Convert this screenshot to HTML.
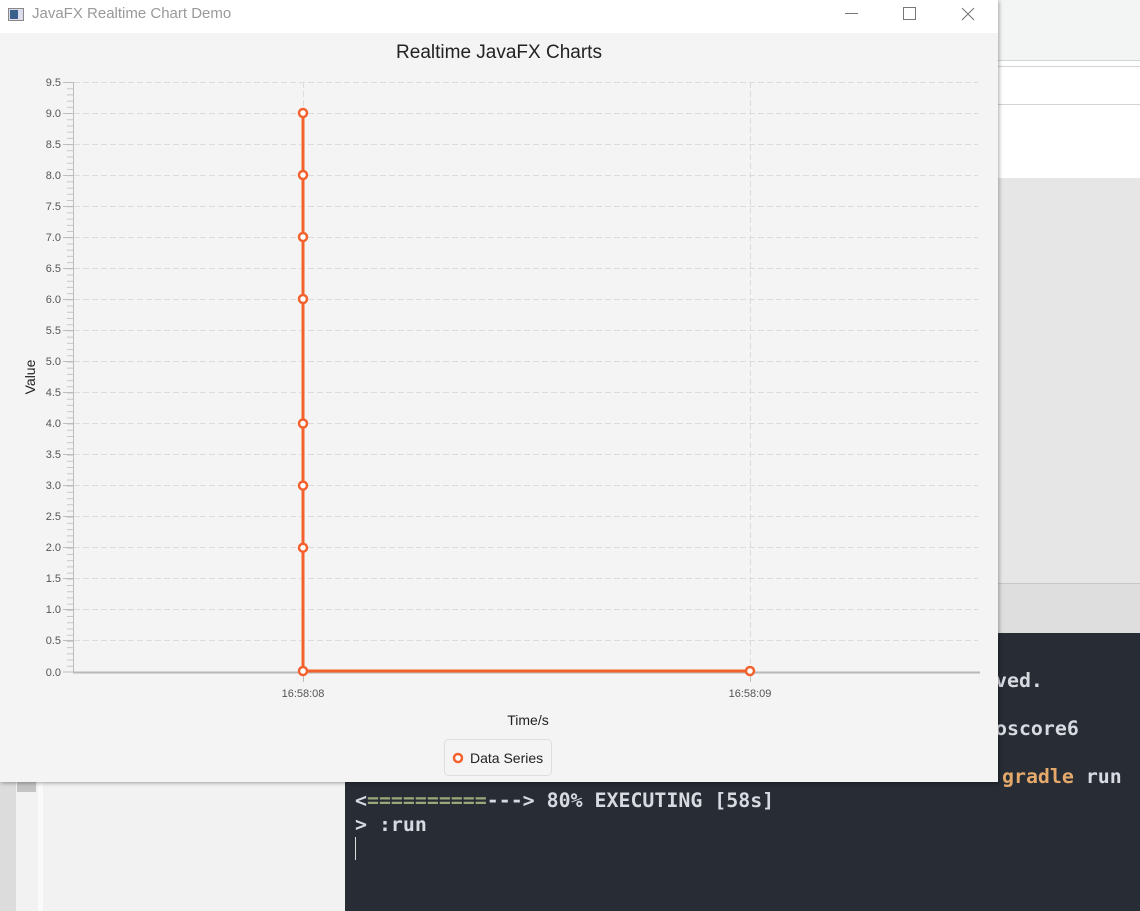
<!DOCTYPE html>
<html><head><meta charset="utf-8"><style>
*{margin:0;padding:0;box-sizing:border-box}
body{width:1140px;height:911px;overflow:hidden;position:relative;background:#e6e6e6;font-family:"Segoe UI","Liberation Sans",sans-serif}
.abs{position:absolute}
.term{font-family:"DejaVu Sans Mono","Liberation Mono",monospace;font-size:19.9px;color:#d7dae0;font-weight:bold;white-space:pre;position:absolute}
</style></head><body>
<div class="abs" style="left:998px;top:0;width:142px;height:60px;background:#f3f4f4"></div>
<div class="abs" style="left:998px;top:60px;width:142px;height:1px;background:#d4d4d4"></div>
<div class="abs" style="left:998px;top:61px;width:142px;height:5px;background:#fff"></div>
<div class="abs" style="left:998px;top:66px;width:142px;height:1px;background:#d4d4d4"></div>
<div class="abs" style="left:998px;top:67px;width:142px;height:37px;background:#fff"></div>
<div class="abs" style="left:998px;top:104px;width:142px;height:1px;background:#d4d4d4"></div>
<div class="abs" style="left:998px;top:105px;width:142px;height:73px;background:#fff"></div>
<div class="abs" style="left:998px;top:583px;width:142px;height:1px;background:#c8c8c8"></div>
<div class="abs" style="left:998px;top:584px;width:142px;height:50px;background:#dedede"></div>
<div class="abs" style="left:0;top:782px;width:345px;height:129px;background:#f2f2f2"></div>
<div class="abs" style="left:0;top:782px;width:16px;height:129px;background:#dcdcdc"></div>
<div class="abs" style="left:17px;top:782px;width:19px;height:10px;background:#c4c4c4"></div>
<div class="abs" style="left:38px;top:782px;width:5px;height:129px;background:#fafafa"></div>
<div class="abs" style="left:345px;top:633px;width:795px;height:278px;background:#282c34"></div>
<div class="term" style="left:995px;top:669px">ved.</div>
<div class="term" style="left:995px;top:717px">oscore6</div>
<div class="term" style="left:1002px;top:765px"><span style="color:#e5a96b">gradle</span> run</div>
<div class="term" style="left:355px;top:789px">&lt;<span style="color:#98a87a">==========</span>---&gt; 80% EXECUTING [58s]</div>
<div class="term" style="left:355px;top:813px">&gt; :run</div>
<div class="abs" style="left:355px;top:837px;width:1px;height:23px;background:#ddd"></div>

<div class="abs" style="left:0;top:0;width:998px;height:782px;background:#f4f4f4;box-shadow:1px 1px 4px rgba(0,0,0,.35)">
<div class="abs" style="left:0;top:0;width:998px;height:33px;background:#fff"></div>
<div class="abs" style="left:8px;top:8px;width:16px;height:13px;border:1px solid #888;background:#dde"><div style="position:absolute;left:1px;top:1px;width:8px;height:9px;background:#3a5f8a"></div></div>
<div class="abs" style="left:32px;top:5px;font-size:15px;color:#999">JavaFX Realtime Chart Demo</div>
<div class="abs" style="left:845px;top:13px;width:13px;height:1px;background:#777"></div>
<div class="abs" style="left:903px;top:7px;width:13px;height:13px;border:1px solid #777"></div>
<svg class="abs" style="left:961px;top:7px" width="14" height="14"><path d="M1 1L13 13M13 1L1 13" stroke="#777" stroke-width="1.1"/></svg>
<div class="abs" style="left:0;top:42px;width:998px;text-align:center;font-size:19px;color:#222">Realtime JavaFX Charts</div>
<svg class="abs" style="left:0;top:0" width="998" height="782">
<g stroke="#dcdcdc" stroke-width="1" stroke-dasharray="6 3">
<path d="M74 82.5H978M74 113.5H978M74 144.5H978M74 175.5H978M74 206.5H978M74 237.5H978M74 268.5H978M74 299.5H978M74 330.5H978M74 361.5H978M74 392.5H978M74 423.5H978M74 454.5H978M74 485.5H978M74 516.5H978M74 547.5H978M74 578.5H978M74 609.5H978M74 640.5H978"/>
<path d="M303.5 82V672M750.5 82V672"/>
</g>
<line x1="70" y1="82" x2="70" y2="672" stroke="#c8c8c8" stroke-width="6" stroke-dasharray="1 5.21"/>
<g stroke="#bdbdbd">
<path d="M63 82.5H73M63 113.5H73M63 144.5H73M63 175.5H73M63 206.5H73M63 237.5H73M63 268.5H73M63 299.5H73M63 330.5H73M63 361.5H73M63 392.5H73M63 423.5H73M63 454.5H73M63 485.5H73M63 516.5H73M63 547.5H73M63 578.5H73M63 609.5H73M63 640.5H73M63 672H73"/>
<path d="M73.5 82V673M303.5 673V682M750.5 673V682"/>
</g>
<line x1="73" y1="672.5" x2="980" y2="672.5" stroke="#b8b8b8" stroke-width="2"/>
<g font-size="11" fill="#555" text-anchor="end" font-family="Segoe UI,Liberation Sans,sans-serif">
<text x="61" y="86">9.5</text><text x="61" y="117">9.0</text><text x="61" y="148">8.5</text><text x="61" y="179">8.0</text><text x="61" y="210">7.5</text><text x="61" y="241">7.0</text><text x="61" y="272">6.5</text><text x="61" y="303">6.0</text><text x="61" y="334">5.5</text><text x="61" y="365">5.0</text><text x="61" y="396">4.5</text><text x="61" y="427">4.0</text><text x="61" y="458">3.5</text><text x="61" y="489">3.0</text><text x="61" y="520">2.5</text><text x="61" y="551">2.0</text><text x="61" y="582">1.5</text><text x="61" y="613">1.0</text><text x="61" y="644">0.5</text><text x="61" y="676">0.0</text>
</g>
<g font-size="11" fill="#555" text-anchor="middle" font-family="Segoe UI,Liberation Sans,sans-serif">
<text x="303" y="697">16:58:08</text><text x="750" y="697">16:58:09</text>
</g>
<text x="528" y="725" font-size="14" fill="#222" text-anchor="middle" font-family="Segoe UI,Liberation Sans,sans-serif">Time/s</text>
<text transform="translate(35,377) rotate(-90)" font-size="14" fill="#222" text-anchor="middle" font-family="Segoe UI,Liberation Sans,sans-serif">Value</text>
<path d="M303 113V671H750" fill="none" stroke="#f3622d" stroke-width="3"/>
<g fill="#fff" stroke="#f3622d" stroke-width="2.5">
<circle cx="303" cy="113" r="4"/><circle cx="303" cy="175" r="4"/><circle cx="303" cy="237" r="4"/><circle cx="303" cy="299" r="4"/><circle cx="303" cy="423.5" r="4"/><circle cx="303" cy="485.6" r="4"/><circle cx="303" cy="547.7" r="4"/><circle cx="303" cy="671" r="4"/><circle cx="750" cy="671" r="4"/>
</g>
<rect x="444.5" y="739.5" width="107" height="36" rx="4" fill="#f4f4f4" stroke="#dedede"/>
<circle cx="458" cy="758" r="4" fill="#fff" stroke="#f3622d" stroke-width="2.5"/>
<text x="470" y="763" font-size="14" fill="#222" font-family="Segoe UI,Liberation Sans,sans-serif">Data Series</text>
</svg>
</div>
</body></html>
